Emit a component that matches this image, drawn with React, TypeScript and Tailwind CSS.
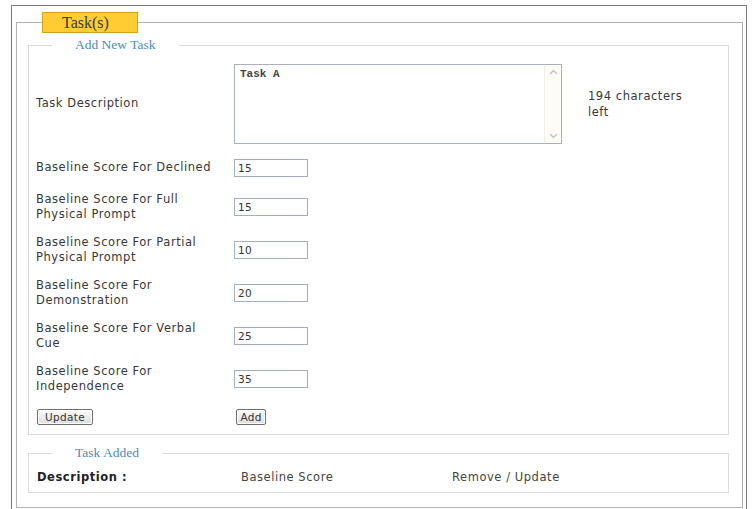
import React from "react";

const sans = "font-['DejaVu_Sans','Verdana',sans-serif]";
const serif = "font-['Liberation_Serif','Times_New_Roman',serif]";

type Row = { lines: string[]; value: string; h: string };

const rows: Row[] = [
  { lines: ["Baseline Score For Declined"], value: "15", h: "h-[35px]" },
  { lines: ["Baseline Score For Full", "Physical Prompt"], value: "15", h: "h-[43px]" },
  { lines: ["Baseline Score For Partial", "Physical Prompt"], value: "10", h: "h-[43px]" },
  { lines: ["Baseline Score For", "Demonstration"], value: "20", h: "h-[43px]" },
  { lines: ["Baseline Score For Verbal", "Cue"], value: "25", h: "h-[43px]" },
  { lines: ["Baseline Score For", "Independence"], value: "35", h: "h-[43px]" },
];

function Chevron({ up }: { up?: boolean }) {
  return (
    <svg width="9" height="6" viewBox="0 0 9 6" className="block">
      <path
        d={up ? "M1 5 L4.5 1.5 L8 5" : "M1 1 L4.5 4.5 L8 1"}
        fill="none"
        stroke="#b9bcc2"
        strokeWidth="1.2"
      />
    </svg>
  );
}

function ScoreInput({ value }: { value: string }) {
  return (
    <input
      readOnly
      value={value}
      className={`${sans} block w-[74px] h-[18px] border border-[#a3afbf] bg-white pl-[3px] text-[10.5px] tracking-[0.4px] text-[#333] outline-none`}
    />
  );
}

function Button({ children, w }: { children: React.ReactNode; w: string }) {
  return (
    <button
      className={`${sans} ${w} h-[16px] rounded-[2px] border border-[#6f6f6f] bg-gradient-to-b from-[#fbfbfb] to-[#dedede] text-[10.5px] leading-[14px] tracking-[0.3px] text-[#333] shadow-[inset_0_0_0_1px_#ffffff]`}
    >
      {children}
    </button>
  );
}

export default function App() {
  return (
    <div className="w-[752px] h-[509px] overflow-hidden bg-white pt-[5px] pl-[11px]">
      {/* outer frame */}
      <div className="w-[736px] border border-[#7c7c7c] pt-[6px] pl-[4px] pr-[3px] pb-[10px]">
        <fieldset className="border border-[#b3b3b3] pl-[11px] pr-[13px] pt-[4px] pb-[14px]">
          <legend
            className={`${serif} ml-[14px] w-[96px] h-[21px] border border-[#d4a11c] bg-[#ffcc33] pl-[19px] text-[16px] leading-[19px] text-[#3a3a3a]`}
          >
            Task(s)
          </legend>

          {/* Add New Task */}
          <fieldset className="border border-[#dadada] pl-[7px] pt-[4px] pb-[1px]">
            <legend
              className={`${serif} ml-[16px] px-[23px] text-[13.5px] leading-[16px] text-[#4b8cb9]`}
            >
              Add New Task
            </legend>

            <div className={`${sans} text-[11.5px] leading-[15px] tracking-[0.55px] text-[#383838]`}>
              <div className="flex h-[93px] items-center">
                <div className="w-[198px]">Task Description</div>
                <div className="flex h-[80px] w-[328px] border border-[#a9b0b9] bg-white">
                  <div className="flex-1 pl-[5px] pt-[2px] font-['Liberation_Mono','Courier_New',monospace] text-[11px] font-bold leading-[14px] tracking-normal text-[#444]">
                    Task A
                  </div>
                  <div className="flex w-[17px] flex-col items-center justify-between border-l border-[#f1f1ea] bg-[#fdfdf6] py-[4px]">
                    <Chevron up />
                    <Chevron />
                  </div>
                </div>
                <div className="ml-[26px] pt-[1px] leading-[16px] whitespace-nowrap">
                  194 characters
                  <br />
                  left
                </div>
              </div>

              {rows.map((r) => (
                <div key={r.lines.join(" ")} className={`flex items-center ${r.h}`}>
                  <div className="w-[198px] whitespace-nowrap">
                    {r.lines.map((l, i) => (
                      <div key={i}>{l}</div>
                    ))}
                  </div>
                  <ScoreInput value={r.value} />
                </div>
              ))}

              <div className="flex h-[33px] items-center">
                <div className="w-[200px] pl-[1px]">
                  <Button w="w-[56px]">Update</Button>
                </div>
                <Button w="w-[30px]">Add</Button>
              </div>
            </div>
          </fieldset>

          {/* Task Added */}
          <fieldset className="mt-[10px] border border-[#dcdcdc] pl-[8px]">
            <legend
              className={`${serif} ml-[15px] px-[23px] text-[13.5px] leading-[16px] text-[#4b8cb9]`}
            >
              Task Added
            </legend>
            <div
              className={`${sans} flex h-[31px] items-center pt-[2px] text-[11.5px] tracking-[0.55px] text-[#444]`}
            >
              <div className="w-[204px] font-bold text-[#222]">Description :</div>
              <div className="w-[211px]">Baseline Score</div>
              <div>Remove / Update</div>
            </div>
          </fieldset>
        </fieldset>
      </div>
    </div>
  );
}
